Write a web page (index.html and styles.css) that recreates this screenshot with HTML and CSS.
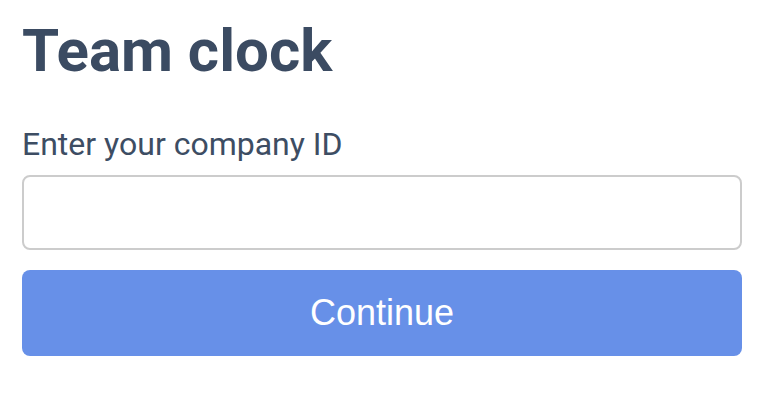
FILE: index.html
```html
<!DOCTYPE html>
<html>
<head>
<meta charset="utf-8">
<link rel="stylesheet" href="styles.css">
</head>
<body>
<main class="page">
  <h1 class="title">Team clock</h1>
  <form class="form">
    <label class="label" for="cid">Enter your company ID</label>
    <input class="input" id="cid" type="text">
    <button class="btn" type="button">Continue</button>
  </form>
</main>
</body>
</html>
```
FILE: styles.css
```css
html, body { margin: 0; padding: 0; background: #fff; }
.page {
  padding: 15px 28px 0 22px;
  display: flex;
  flex-direction: column;
}
.title {
  margin: 0;
  font-family: Roboto, "Noto Sans", sans-serif;
  font-weight: 700;
  font-size: 60px;
  line-height: 72px;
  color: #3b4b62;
}
.form {
  display: flex;
  flex-direction: column;
  margin-top: 39px;
}
.label {
  font-family: Roboto, "Noto Sans", sans-serif;
  font-size: 32px;
  line-height: 36px;
  color: #3d4d63;
}
.input {
  margin-top: 13px;
  height: 75px;
  box-sizing: border-box;
  border: 2px solid #cccccc;
  border-radius: 8px;
  background: #fff;
  outline: none;
}
.btn {
  margin-top: 20px;
  height: 86px;
  border: none;
  border-radius: 8px;
  background: #6790e8;
  color: #fff;
  font-family: "Liberation Sans", Arial, sans-serif;
  font-size: 36px;
}
```
